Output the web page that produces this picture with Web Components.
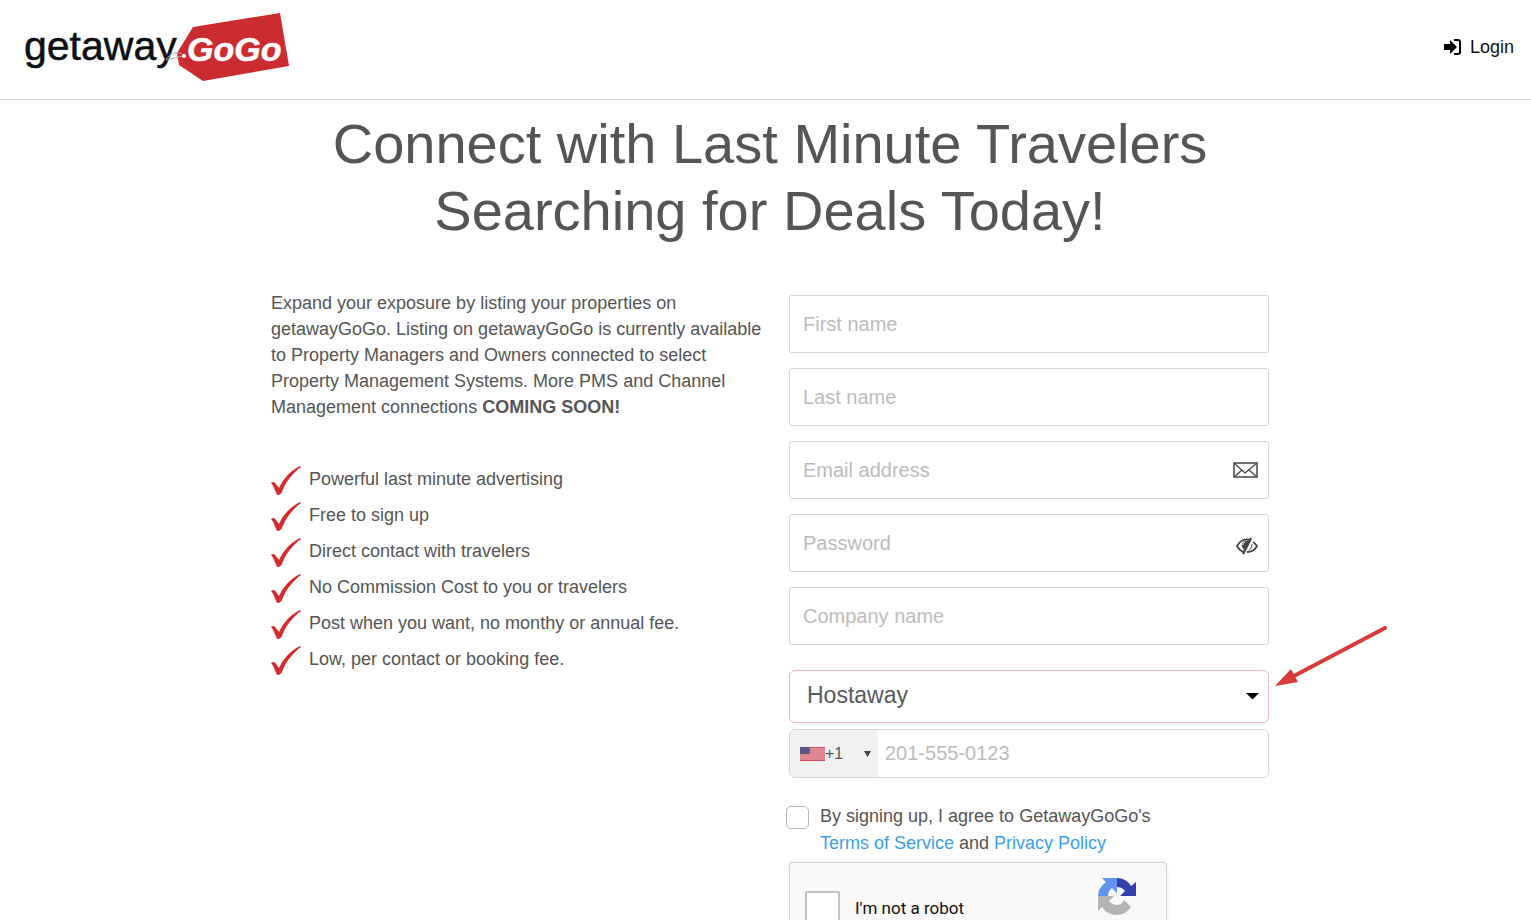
<!DOCTYPE html>
<html lang="en">
<head>
<meta charset="utf-8">
<meta name="viewport" content="width=device-width, initial-scale=1">
<title>getawayGoGo</title>
<style>
  body {
    margin: 0;
    background: #fff;
    color: #555;
    font: 18px/26px "Liberation Sans", Arial, sans-serif;
  }
</style>
</head>
<body>
<signup-page></signup-page>

<script>
function define(name, html, setup) {
  const template = document.createElement('template');
  template.innerHTML = `<style>* { box-sizing: border-box; }</style>${html}`;

  customElements.define(name, class extends HTMLElement {
    constructor() {
      super();
      const shadowDOM = this.attachShadow({mode: 'open'});
      shadowDOM.appendChild(template.content.cloneNode(true));
      this.shadowDOM = shadowDOM;
    }

    connectedCallback() {
      if (setup) {
        setup(this, this.shadowDOM);
      }
    }
  });
}

define('site-logo', `
  <style>
    :host { display: block; }
    a, svg { display: block; }
    .name { font: 41px "Liberation Sans", Arial, sans-serif; fill: #0c1014; stroke: #0c1014; stroke-width: .5px; }
    .tag { font: italic bold 34px "Liberation Sans", Arial, sans-serif; fill: #fff; stroke: #fff; stroke-width: .5px; }
  </style>
  <a href="#" aria-label="getaway GoGo">
    <svg width="266" height="72" viewBox="0 0 266 72">
      <path d="M169 16 256 2 265 55 179 70 155 54 153 42Z" fill="#cb2c30"/>
      <text class="name" x="0" y="49">getaway</text>
      <path d="M160 44c-9-5-13-1-18 4M160 45c-7 1-12 3-18 4" fill="none" stroke="#aaa"/>
      <circle cx="160" cy="45" r="2" fill="#fff"/>
      <text class="tag" x="163" y="50">GoGo</text>
    </svg>
  </a>
`);

define('site-header', `
  <style>
    :host {
      display: flex;
      align-items: center;
      justify-content: space-between;
      padding: 11px 17px 16px 24px;
      border-bottom: 1px solid #d9d9d9;
    }
    .login {
      display: flex;
      align-items: center;
      gap: 9px;
      color: #111;
      text-decoration: none;
    }
  </style>
  <site-logo></site-logo>
  <a class="login" href="#">
    <svg width="18" height="18" viewBox="0 0 18 18">
      <path d="M1 6h6V2l7 7-7 7v-4H1z"/>
      <path d="M11 2h4q2 0 2 2v10q0 2-2 2h-4" fill="none" stroke="#000" stroke-width="2"/>
    </svg>
    Login
  </a>
`);

define('check-item', `
  <style>
    :host { display: flex; gap: 7px; height: 36px; }
    svg { flex: none; }
  </style>
  <svg width="31" height="30" viewBox="0 0 31 30">
    <path d="M0 17C2 15 4 16 5 18L8 22C12 13 19 5 29 0L30 1C22 7 15 15 11 26C10 28 9 29 6 29C4 25 3 20 0 17Z" fill="#d32b30"/>
  </svg>
  <span><slot></slot></span>
`);

define('text-field', `
  <style>
    :host {
      display: flex;
      align-items: center;
      height: 58px;
      padding-right: 10px;
      border: 1px solid #d5d5d5;
      border-radius: 3px;
    }
    input {
      flex: 1;
      min-width: 0;
      height: 100%;
      padding: 0 13px;
      border: 0;
      outline: 0;
      background: none;
      color: #555;
      font: 20px "Liberation Sans", Arial, sans-serif;
    }
    input::placeholder { color: #bbb; }
  </style>
  <input>
  <slot></slot>
`, (host, root) => {
  const input = root.querySelector('input');
  input.type = host.getAttribute('type') || 'text';
  input.placeholder = host.getAttribute('label');
  input.setAttribute('aria-label', host.getAttribute('label'));
});

define('system-select', `
  <style>
    :host {
      display: grid;
      align-items: center;
      position: relative;
      height: 53px;
      border: 1px solid #f0b8bb;
      border-radius: 6px;
    }
    select, .caret { grid-area: 1 / 1; }
    select {
      width: 100%;
      height: 100%;
      padding: 0 17px 3px;
      appearance: none;
      border: 0;
      outline: 0;
      background: none;
      color: #555b60;
      font: 23px "Liberation Sans", Arial, sans-serif;
    }
    .caret {
      justify-self: end;
      margin-right: 9px;
      pointer-events: none;
    }
    .pointer {
      position: absolute;
      left: 100%;
      top: -46px;
      margin-left: 7px;
      pointer-events: none;
    }
  </style>
  <select aria-label="Property management system">
    <option>Hostaway</option>
  </select>
  <svg class="caret" width="13" height="7" viewBox="0 0 13 7"><path d="M0 0h13L6.500 6.500z"/></svg>
  <svg class="pointer" width="114" height="64" viewBox="0 0 114 64">
    <path d="M110 3 17 52" stroke="#d93a3a" stroke-width="4" stroke-linecap="round"/>
    <path d="M0 61 16 44 23 57z" fill="#d93a3a"/>
  </svg>
`);

define('phone-field', `
  <style>
    :host {
      display: flex;
      height: 49px;
      overflow: hidden;
      border: 1px solid #d5d5d5;
      border-radius: 6px;
    }
    button {
      display: flex;
      align-items: center;
      width: 88px;
      padding: 0 7px 0 10px;
      border: 0;
      background: #f1f1f1;
      color: #555;
      font: 16px "Liberation Sans", Arial, sans-serif;
    }
    .arrow { margin-left: auto; }
    input {
      flex: 1;
      min-width: 0;
      padding: 0 7px;
      border: 0;
      outline: 0;
      color: #555;
      font: 20px "Liberation Sans", Arial, sans-serif;
    }
    input::placeholder { color: #bbb; }
  </style>
  <button type="button" aria-label="Country code +1">
    <svg width="25" height="14" viewBox="0 0 25 14">
      <path d="M0 0h25v14H0z" fill="#e08b96"/>
      <path d="M0 .5h25M0 13.500h25" stroke="#cb4c60"/>
      <path d="M0 3.500h25M0 5.500h25M0 7.500h25M0 9.500h25M0 11.500h25" stroke="#d9788a" stroke-width=".6"/>
      <path d="M0 0h10v7H0z" fill="#5c5787"/>
    </svg>
    <span>+1</span>
    <svg class="arrow" width="7" height="6" viewBox="0 0 7 6"><path d="M0 0h7L3.500 6z" fill="#444"/></svg>
  </button>
  <input type="tel" placeholder="201-555-0123" aria-label="Phone number">
`);

define('terms-check', `
  <style>
    :host { display: flex; gap: 11px; line-height: 27px; }
    input {
      flex: none;
      width: 23px;
      height: 23px;
      margin: 3px 0 0;
      appearance: none;
      border: 1px solid #adb5bd;
      border-radius: 5px;
      background: #fff;
    }
    input:checked { background: #3b9fe6; }
    a { color: #3b9fe6; text-decoration: none; }
  </style>
  <input type="checkbox" id="terms">
  <label for="terms">By signing up, I agree to GetawayGoGo's<br>
    <a href="#">Terms of Service</a> and <a href="#">Privacy Policy</a></label>
`);

define('robot-check', `
  <style>
    :host {
      display: flex;
      align-items: center;
      width: 378px;
      max-width: 100%;
      height: 92px;
      padding: 0 30px 0 15px;
      border: 1px solid #d3d3d3;
      border-radius: 4px;
      background: #f9f9f9;
      box-shadow: 0 0 4px rgba(0, 0, 0, .08);
      color: #111;
      font-family: Roboto, "Liberation Sans", sans-serif;
      font-size: 17px;
    }
    input {
      width: 35px;
      height: 35px;
      margin: 0 15px 0 0;
      appearance: none;
      border: 2px solid #c1c1c1;
      border-radius: 2px;
      background: #fff;
    }
    input:checked { background: #4a90e2; }
    svg { align-self: start; margin: 14px 0 0 auto; }
  </style>
  <input type="checkbox" id="robot">
  <label for="robot">I'm not a robot</label>
  <svg width="38" height="38" viewBox="0 0 38 38">
    <path d="M38 5v14H22l5-5q-3-4-8-4V1q9 0 14 8z" fill="#3541ab"/>
    <path d="M4 1h15v15l-5-5q-4 3-4 8H0Q0 11 8 5z" fill="#6094f2"/>
    <path d="M0 34V19h16l-5 5q3 4 8 4 5 0 7-5l7 7q-6 8-14 8-10 0-15-8z" fill="#b4b4b4"/>
  </svg>
`);

define('signup-page', `
  <style>
    :host { display: block; }
    main {
      max-width: 1007px;
      margin: 0 auto;
      padding: 0 0 24px 9px;
    }
    h1 {
      margin: 0 0 51px;
      padding-top: 10px;
      font-size: 56px;
      font-weight: 400;
      line-height: 67px;
      text-align: center;
    }
    .columns {
      display: grid;
      grid-template-columns: 1fr 480px;
      gap: 24px;
    }
    p { margin: -5px 0 46px; }
    ul { margin: 0; padding: 0; list-style: none; }
    form, .fields { display: flex; flex-direction: column; }
    .fields { gap: 15px; margin-bottom: 25px; }
    phone-field { margin: 6px 0 25px; }
    terms-check { margin: 0 0 5px -3px; }
    .low { margin-top: 6px; }
  </style>
  <site-header></site-header>
  <main>
    <h1>Connect with Last Minute Travelers<br>Searching for Deals Today!</h1>
    <div class="columns">
      <section>
        <p>Expand your exposure by listing your properties on getawayGoGo. Listing on getawayGoGo is currently available to Property Managers and Owners connected to select Property Management Systems. More PMS and Channel Management connections <b>COMING SOON!</b></p>
        <ul>
          <li><check-item>Powerful last minute advertising</check-item></li>
          <li><check-item>Free to sign up</check-item></li>
          <li><check-item>Direct contact with travelers</check-item></li>
          <li><check-item>No Commission Cost to you or travelers</check-item></li>
          <li><check-item>Post when you want, no monthy or annual fee.</check-item></li>
          <li><check-item>Low, per contact or booking fee.</check-item></li>
        </ul>
      </section>
      <form>
        <div class="fields">
          <text-field label="First name"></text-field>
          <text-field label="Last name"></text-field>
          <text-field label="Email address" type="email">
            <svg width="25" height="16" viewBox="0 0 25 16" fill="none" stroke="#444">
              <path d="M1 1h23v14H1z" stroke-width="1.500"/>
              <path d="M1 1l11 10L24 1M1 15l8-7M24 15l-8-7" stroke-width="1.200"/>
            </svg>
          </text-field>
          <text-field label="Password" type="password">
            <svg class="low" width="22" height="18" viewBox="0 0 22 18" fill="none" stroke="#444">
              <path d="M14 3C8 1 4 4 1 9c2 4 4 5 6 6M17 5c2 1 3 3 4 4-2 4-6 6-10 6" stroke-width="1.800"/>
              <path d="M15 1 7 17" stroke-width="2.500"/>
              <path d="M12 4C7 4 5 7 7 11l2 1z" fill="#444"/>
              <path d="M9 5c-2 1-2 2-2 3" stroke="#fff"/>
              <path d="M16 7c0 3-1 5-3 6"/>
            </svg>
          </text-field>
          <text-field label="Company name"></text-field>
        </div>
        <system-select></system-select>
        <phone-field></phone-field>
        <terms-check></terms-check>
        <robot-check></robot-check>
      </form>
    </div>
  </main>
`);
</script>
</body>
</html>
